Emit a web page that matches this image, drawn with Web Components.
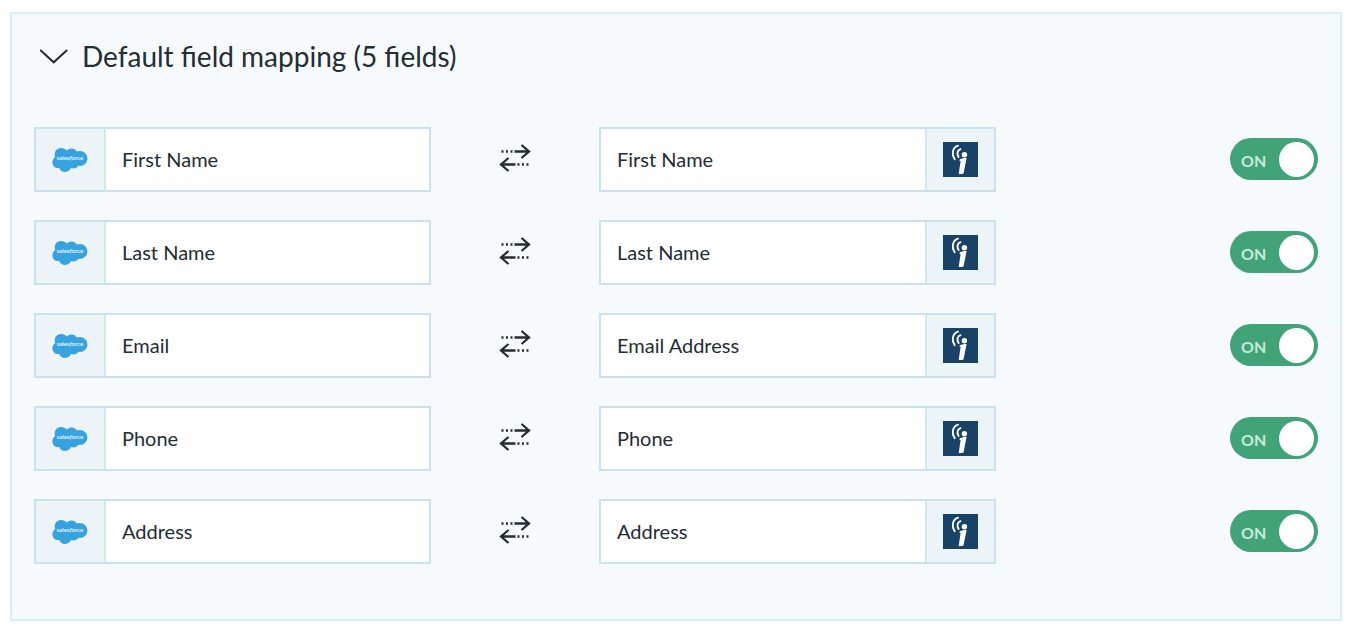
<!DOCTYPE html>
<html lang="en">
<head>
<meta charset="utf-8">
<meta name="viewport" content="width=device-width, initial-scale=1">
<title>Default field mapping</title>
<style>
  body { margin: 0; padding: 12px 8px 10px 10px; background: #fff; color: #232d33; font-family: Lato, "Open Sans", sans-serif; font-size: 20px; }
</style>
</head>
<body>
<mapping-panel heading="Default field mapping (5 fields)">
  <mapping-row source="First Name" target="First Name"></mapping-row>
  <mapping-row source="Last Name" target="Last Name"></mapping-row>
  <mapping-row source="Email" target="Email Address"></mapping-row>
  <mapping-row source="Phone" target="Phone"></mapping-row>
  <mapping-row source="Address" target="Address"></mapping-row>
</mapping-panel>

<template id="panel-template">
  <style>
    :host { display: block; box-sizing: border-box; background: #f6fafd; border: 2px solid #d9edf5; padding: 22px 22px 55px; }
    h2 { margin: 0 0 50px; font-size: 28px; line-height: 41px; font-weight: 400; }
    button { display: flex; align-items: center; gap: 14px; margin: 0; padding: 0 0 0 6px; border: 0; background: none; color: inherit; font: inherit; text-align: left; cursor: pointer; }
    svg { display: block; width: 28px; height: 16px; flex: none; }
    .rows { display: grid; gap: 28px; }
    .rows[hidden] { display: none; }
  </style>
  <h2><button type="button" aria-expanded="true" aria-controls="rows">
    <svg viewBox="0 0 28 16" aria-hidden="true"><path d="M.8 1.500 13.700 13.300 26.600 1.500" fill="none" stroke="#232d33" stroke-width="2" stroke-linecap="round"/></svg>
    <span></span>
  </button></h2>
  <div class="rows" id="rows"><slot></slot></div>
</template>

<template id="row-template">
  <style>
    :host { display: grid; grid-template-columns: 397fr 168fr 397fr 322fr; align-items: center; }
    toggle-switch { justify-self: end; }
    sync-arrows { justify-self: center; }
  </style>
  <mapping-field class="source"><salesforce-logo></salesforce-logo></mapping-field>
  <sync-arrows></sync-arrows>
  <mapping-field class="target" side="end"><contact-logo></contact-logo></mapping-field>
  <toggle-switch></toggle-switch>
</template>

<template id="field-template">
  <style>
    :host { display: flex; box-sizing: border-box; height: 65px; border: 2px solid #c8e2ee; background: #fff; }
    :host([side="end"]) { flex-direction: row-reverse; }
    .icon { display: flex; flex: none; width: 68px; align-items: center; justify-content: center; background: #ecf4f8; border-right: 2px solid #d0e7f1; }
    :host([side="end"]) .icon { width: 67px; border-right: 0; border-left: 2px solid #d0e7f1; }
    input { flex: 1; min-width: 0; margin: 0; padding: 0 16px 2px; border: 0; outline: 0; background: none; color: inherit; font: inherit; }
  </style>
  <div class="icon"><slot></slot></div>
  <input type="text" readonly>
</template>

<template id="arrows-template">
  <style>
    :host { display: block; padding-bottom: 3px; }
    svg { display: block; width: 32px; height: 30px; }
  </style>
  <svg viewBox="0 0 32 30" role="img" aria-label="Syncs both ways" fill="none" stroke="#232d33" stroke-width="2.300">
    <path d="M2.500 8.500h2M7 8.500h2M11.500 8.500h2M15.500 8.500H30M22.500 2l7.500 6.500-7.500 6.500M29.500 21.500h-2M25 21.500h-2M20.500 21.500h-2M16.500 21.500H2M9.500 15 2 21.500 9.500 28"/>
  </svg>
</template>

<template id="salesforce-template">
  <style>
    :host { display: block; }
    svg { display: block; width: 36px; height: 26px; }
    text { font: 700 6px Lato, sans-serif; fill: #e3f3fc; }
    .f { font-style: italic; }
  </style>
  <svg viewBox="0 0 36 26" role="img" aria-label="Salesforce">
    <path fill="#36a2e0" d="M15 3.600C16.300 2.200 18 1.500 19.700 1.600c2.200 0 4 1.200 5.100 3 1-.5 2-.7 3-.7 4.200 0 7.600 3.400 7.600 7.500s-3.400 7.500-7.600 7.500c-.5 0-1 0-1.500-.1-1 1.700-2.800 2.800-4.800 2.800-.9 0-1.700-.2-2.400-.5-1 2.300-3.200 3.900-5.900 3.900s-5-1.600-6-4l-1.200.1C2.900 21.100.4 18.400.4 15.200c0-2.200 1.200-4 2.900-5.100-.4-.8-.6-1.700-.6-2.700C2.700 3.900 5.600 1.100 9.100 1.100c2.400 0 4.500 1 5.900 2.500Z"/>
    <text x="18" y="13" text-anchor="middle">sales<tspan class="f">f</tspan>orce</text>
  </svg>
</template>

<template id="contact-template">
  <style>
    :host { display: block; }
    svg { display: block; width: 35px; height: 35px; }
  </style>
  <svg viewBox="0 0 35 35" role="img" aria-label="Contact service">
    <path fill="#194267" d="M0 0h35v35H0z"/>
    <g fill="none" stroke="#fff" stroke-linecap="round" stroke-width="1.900">
      <path d="M15 3.700C9 6 8.500 12.500 11.700 17.300"/>
      <path d="M17.500 7.200c-3.400 1.400-3.800 4.600-1.900 7.700"/>
    </g>
    <circle cx="21.400" cy="12.700" r="2.700" fill="#fff"/>
    <path fill="#fff" d="M16.800 17.300c2.200-1 4.300-1.300 6.800-1.300l-3.100 15.500c-1.500.5-3 .7-4.800.6l1.900-13.200-1.100.1Z"/>
  </svg>
</template>

<template id="toggle-template">
  <style>
    :host { display: block; padding-bottom: 2px; }
    label { display: grid; width: 88px; height: 42px; align-items: center; cursor: pointer; }
    input, span { grid-area: 1 / 1; }
    input { appearance: none; display: flex; align-items: center; box-sizing: border-box; width: 88px; height: 42px; margin: 0; padding: 1px 4px 0; border-radius: 21px; background: #a9b6bd; cursor: pointer; }
    input::before { content: ""; width: 35px; height: 35px; border-radius: 50%; background: #fff; }
    input:checked { background: #42a378; justify-content: flex-end; }
    span { position: relative; padding: 4px 11px 0; color: #c8ebda; font-size: 16px; font-weight: 700; line-height: 20px; pointer-events: none; }
    input:not(:checked) + span { text-align: right; }
  </style>
  <label><input type="checkbox" role="switch" checked><span>ON</span></label>
</template>

<script>
  class TemplateElement extends HTMLElement {
    constructor() {
      super();
      const template = document.getElementById(this.constructor.template);
      this.attachShadow({ mode: 'open' }).append(template.content.cloneNode(true));
    }
  }

  class SyncArrows extends TemplateElement { static template = 'arrows-template'; }
  class SalesforceLogo extends TemplateElement { static template = 'salesforce-template'; }
  class ContactLogo extends TemplateElement { static template = 'contact-template'; }

  class MappingField extends TemplateElement {
    static template = 'field-template';
    static observedAttributes = ['value', 'label'];
    attributeChangedCallback(name, previous, value) {
      const input = this.shadowRoot.querySelector('input');
      if (name === 'value') input.value = value;
      else input.setAttribute('aria-label', value);
    }
  }

  class ToggleSwitch extends TemplateElement {
    static template = 'toggle-template';
    connectedCallback() {
      const input = this.shadowRoot.querySelector('input');
      const text = this.shadowRoot.querySelector('span');
      input.onchange = () => { text.textContent = input.checked ? 'ON' : 'OFF'; };
    }
  }

  class MappingRow extends TemplateElement {
    static template = 'row-template';
    connectedCallback() {
      const source = this.shadowRoot.querySelector('.source');
      const target = this.shadowRoot.querySelector('.target');
      source.setAttribute('value', this.getAttribute('source'));
      source.setAttribute('label', 'Salesforce field');
      target.setAttribute('value', this.getAttribute('target'));
      target.setAttribute('label', 'Contact field');
    }
  }

  class MappingPanel extends TemplateElement {
    static template = 'panel-template';
    connectedCallback() {
      const button = this.shadowRoot.querySelector('button');
      const rows = this.shadowRoot.querySelector('.rows');
      button.querySelector('span').textContent = this.getAttribute('heading');
      button.onclick = () => {
        rows.hidden = !rows.hidden;
        button.setAttribute('aria-expanded', String(!rows.hidden));
      };
    }
  }

  customElements.define('sync-arrows', SyncArrows);
  customElements.define('salesforce-logo', SalesforceLogo);
  customElements.define('contact-logo', ContactLogo);
  customElements.define('mapping-field', MappingField);
  customElements.define('toggle-switch', ToggleSwitch);
  customElements.define('mapping-row', MappingRow);
  customElements.define('mapping-panel', MappingPanel);
</script>
</body>
</html>
